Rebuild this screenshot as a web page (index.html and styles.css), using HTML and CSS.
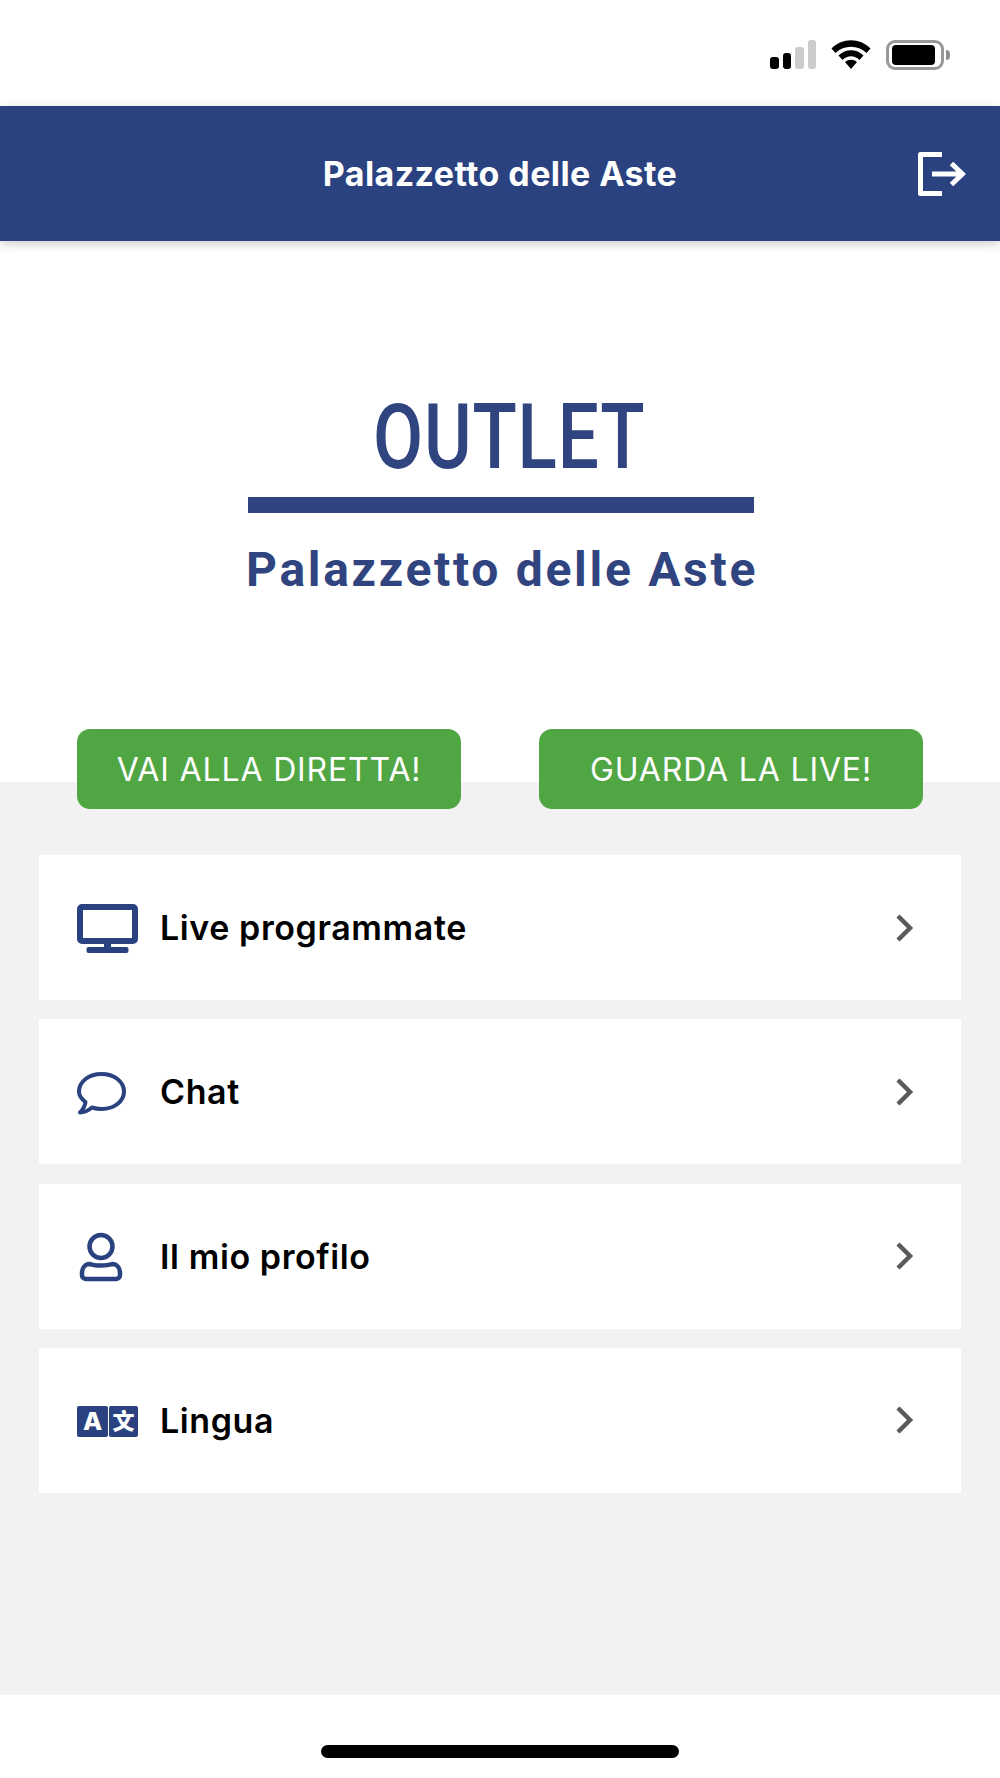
FILE: index.html
```html
<!DOCTYPE html>
<html>
<head>
  <meta http-equiv="content-type" content="text/html; charset=UTF-8">
  <title>Palazzetto delle Aste</title>
  <link rel="stylesheet" href="styles.css">
</head>
<body>
<div class="status-bar">
  <div class="signal">
    <span class="bar bar-1"></span>
    <span class="bar bar-2"></span>
    <span class="bar bar-3"></span>
    <span class="bar bar-4"></span>
  </div>
  <svg class="wifi" width="40" height="30" viewBox="0 0 40 30">
    <path d="M0.5 9.5C11 -1.5 29 -1.5 39.5 9.5L35.5 14C27 5.5 13 5.5 4.5 14Z"/>
    <path d="M7.5 16.5C14.5 9.5 25.5 9.5 32.5 16.5L28.5 21C23.5 16 16.5 16 11.5 21Z"/>
    <path d="M14 23C17.5 20 22.5 20 26 23L20 30Z"/>
  </svg>
  <div class="battery"><span class="battery-level"></span></div>
  <span class="battery-cap"></span>
</div>

<header class="app-header">
  <h1>Palazzetto delle Aste</h1>
  <svg class="logout" width="48" height="44" viewBox="0 0 48 44">
    <path d="M24 2.5H2.5V41.5H24" fill="none" stroke="#fff" stroke-width="5" stroke-linejoin="round"/>
    <path d="M14 22H44M33.500 11.500L44.500 22L33.500 32.500" fill="none" stroke="#fff" stroke-width="5"/>
  </svg>
</header>

<section class="hero">
  <div class="logo">
    <div class="logo-outlet">OUTLET</div>
    <div class="logo-rule"></div>
    <div class="logo-name">Palazzetto delle Aste</div>
  </div>
</section>

<main class="content">
  <div class="actions">
    <a class="btn">VAI ALLA DIRETTA!</a>
    <a class="btn">GUARDA LA LIVE!</a>
  </div>

  <ul class="menu">
    <li class="menu-row">
      <svg class="menu-icon" width="62" height="61" viewBox="0 0 62 61">
        <rect x="3" y="10" width="55" height="34" rx="2" fill="none" stroke="#2a4280" stroke-width="6"/>
        <rect x="27" y="46" width="7" height="6" fill="#2a4280"/>
        <rect x="9.500" y="50" width="42" height="6" rx="2" fill="#2a4280"/>
      </svg>
      <span class="menu-label">Live programmate</span>
      <svg class="chevron" width="20" height="30" viewBox="0 0 20 30">
        <path d="M3 3L15 15L3 27" fill="none" stroke="#5a5a5a" stroke-width="4.500"/>
      </svg>
    </li>
    <li class="menu-row">
      <svg class="menu-icon" width="62" height="61" viewBox="0 0 62 61">
        <path d="M24.500 13C37 13 47 20.500 47 30.500C47 40.500 37 48 24.500 48C21 48 18 47.500 15 46.500C12 49 8 51.500 3 51.500C5.500 49 8 45 8.500 41C4.500 38 2 34.500 2 30.500C2 20.500 12 13 24.500 13Z" fill="none" stroke="#2a4280" stroke-width="4" stroke-linejoin="round"/>
      </svg>
      <span class="menu-label">Chat</span>
      <svg class="chevron" width="20" height="30" viewBox="0 0 20 30">
        <path d="M3 3L15 15L3 27" fill="none" stroke="#5a5a5a" stroke-width="4.500"/>
      </svg>
    </li>
    <li class="menu-row">
      <svg class="menu-icon" width="62" height="61" viewBox="0 0 62 61">
        <circle cx="24" cy="20.500" r="11.500" fill="none" stroke="#2a4280" stroke-width="4.500"/>
        <path d="M13 38C17 40 30 40 35 38C40 38 43 42 43 47V49C43 51.500 41 53 39 53H9C7 53 5 51.500 5 49V47C5 42 8 38 13 38Z" fill="none" stroke="#2a4280" stroke-width="4.500" stroke-linejoin="round"/>
      </svg>
      <span class="menu-label">Il mio profilo</span>
      <svg class="chevron" width="20" height="30" viewBox="0 0 20 30">
        <path d="M3 3L15 15L3 27" fill="none" stroke="#5a5a5a" stroke-width="4.500"/>
      </svg>
    </li>
    <li class="menu-row">
      <svg class="menu-icon" width="62" height="61" viewBox="0 0 62 61">
        <rect x="0" y="16" width="31" height="31" rx="2" fill="#2a4280"/>
        <rect x="32" y="16" width="29" height="31" rx="2" fill="#2a4280"/>
        <text class="lang-latin" x="15.500" y="40" text-anchor="middle">A</text>
        <text class="lang-cjk" x="46.500" y="38.500" text-anchor="middle">文</text>
      </svg>
      <span class="menu-label">Lingua</span>
      <svg class="chevron" width="20" height="30" viewBox="0 0 20 30">
        <path d="M3 3L15 15L3 27" fill="none" stroke="#5a5a5a" stroke-width="4.500"/>
      </svg>
    </li>
  </ul>
</main>

<footer class="home-area">
  <span class="home-bar"></span>
</footer>
</body>
</html>
```

FILE: styles.css
```css
* { box-sizing: border-box; }

body {
  margin: 0;
  height: 1778px;
  display: flex;
  flex-direction: column;
  background-color: #fff;
  font-family: "Inter", "Liberation Sans", sans-serif;
}

/* status bar */
.status-bar {
  height: 106px;
  flex: none;
  display: flex;
  align-items: flex-start;
  padding: 39px 0 0 770px;
}
.signal {
  display: flex;
  align-items: flex-end;
  gap: 4px;
  height: 30px;
  margin-right: 15px;
}
.bar { width: 8.500px; border-radius: 3px; background-color: #000; }
.bar-1 { height: 12px; }
.bar-2 { height: 16px; }
.bar-3 { height: 22px; background-color: #ccc; }
.bar-4 { height: 29px; background-color: #ccc; }
.wifi { margin-right: 15px; }
.battery {
  width: 58px;
  height: 30px;
  padding: 2px 3px;
  border: 3px solid #999;
  border-radius: 9px;
  margin-top: 1px;
}
.battery-level {
  display: block;
  width: 43px;
  height: 20px;
  background-color: #000;
  border-radius: 4px;
}
.battery-cap {
  width: 4px;
  height: 10px;
  margin: 11px 0 0 2px;
  background-color: #8e8e8e;
  border-radius: 0 4px 4px 0;
}

/* blue header */
.app-header {
  height: 135px;
  flex: none;
  position: relative;
  z-index: 1;
  display: flex;
  align-items: center;
  justify-content: center;
  background-color: #2a4280;
  box-shadow: 0 3px 10px rgba(0, 0, 0, .2);
}
.app-header h1 {
  margin: 0 0 1px;
  color: #fff;
  font-size: 34px;
  letter-spacing: .4px;
  font-weight: 700;
}
.logout { position: absolute; right: 34px; top: 46px; }

/* logo */
.hero {
  height: 541px;
  flex: none;
  padding-top: 155px;
}
.logo {
  width: 506px;
  margin-left: 248px;
  display: flex;
  flex-direction: column;
  align-items: center;
  color: #304480;
  font-family: "Roboto", "Liberation Sans", sans-serif;
}
.logo-outlet {
  margin: 3px 0 0 16px;
  font-size: 91px;
  line-height: 76px;
  font-weight: 500;
  transform: scaleX(.8);
  letter-spacing: 1px;
}
.logo-rule {
  width: 506px;
  height: 16px;
  margin-top: 22px;
  background-color: #304480;
}
.logo-name {
  margin: 33px 0 0 2px;
  font-size: 48px;
  line-height: 48px;
  font-weight: 700;
  letter-spacing: 2.700px;
  white-space: nowrap;
}

/* grey part */
.content {
  flex: 1;
  background-color: #f2f2f2;
  padding: 0 39px;
}
.actions {
  display: flex;
  justify-content: space-between;
  margin: -53px 38px 46px;
}
.btn {
  width: 384px;
  height: 80px;
  display: flex;
  align-items: center;
  justify-content: center;
  color: #fff;
  background-color: #50a643;
  border-radius: 13px;
  font-size: 32px;
  letter-spacing: .85px;
}
.menu {
  list-style: none;
  margin: 0;
  padding: 0;
  display: flex;
  flex-direction: column;
  gap: 19.330px;
}
.menu-row {
  height: 145px;
  display: flex;
  align-items: center;
  padding: 0 46px 0 38px;
  background-color: #fff;
}
.menu-icon { flex: none; }
.menu-label {
  flex: 1;
  margin-left: 21px;
  font-size: 34px;
  letter-spacing: .6px;
  font-weight: 600;
  color: #000;
}
.chevron { flex: none; }
.lang-latin { font: 800 25px "Inter", sans-serif; fill: #fff; }
.lang-cjk { font: 900 22px "Noto Sans CJK SC", sans-serif; fill: #fff; }

/* bottom home indicator */
.home-area {
  height: 83px;
  flex: none;
  display: flex;
  justify-content: center;
  padding-top: 50px;
}
.home-bar {
  width: 358px;
  height: 13px;
  border-radius: 7px;
  background-color: #000;
}
```
